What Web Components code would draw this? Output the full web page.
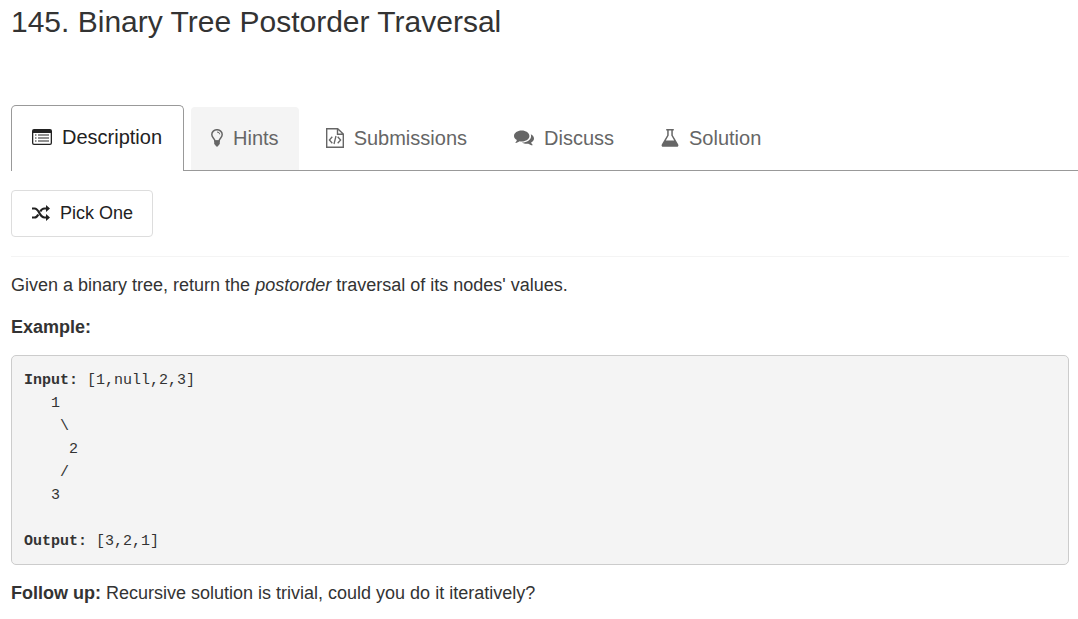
<!DOCTYPE html>
<html lang="en">
<head>
<meta charset="utf-8">
<meta name="viewport" content="width=device-width, initial-scale=1">
<title>145. Binary Tree Postorder Traversal</title>
<style>
  body { margin: 0; background: #fff; color: #333; font-family: "Liberation Sans", Arial, sans-serif; font-size: 18px; line-height: 26px; }
</style>
</head>
<body>
<problem-page>
  <span slot="title">145. Binary Tree Postorder Traversal</span>
  <tab-bar slot="tabs">
    <tab-link icon="list" active>Description</tab-link>
    <tab-link icon="bulb" shaded>Hints</tab-link>
    <tab-link icon="code">Submissions</tab-link>
    <tab-link icon="chat">Discuss</tab-link>
    <tab-link icon="flask">Solution</tab-link>
  </tab-bar>
  <pick-button>Pick One</pick-button>
  <problem-text></problem-text>
</problem-page>
<script>
const ICONS = {
  list: '<svg width="20" height="16" viewBox="0 0 20 16"><path fill-rule="evenodd" d="M2 0h16a2 2 0 0 1 2 2v12a2 2 0 0 1-2 2H2a2 2 0 0 1-2-2V2a2 2 0 0 1 2-2zM1.300 4v10a.7.7 0 0 0 .7.7h16a.7.7 0 0 0 .7-.7V4z"/><path d="M3 5.500h1.500v1H3zM6 5.500h11v1H6zM3 8.500h1.500v1H3zM6 8.500h11v1H6zM3 11.500h1.500v1H3zM6 11.500h11v1H6z"/></svg>',
  bulb: '<svg width="12" height="18" viewBox="0 0 12 18"><path d="M3.900 12C3.900 9.500.8 8.700.8 5.600a5.200 4.900 0 0 1 10.400 0c0 3.100-3.100 3.900-3.100 6.400z" fill="none" stroke="currentColor" stroke-width="1.500"/><path d="M3.200 11.400h5.600V15l-1 1-1 1.500H5.200L4.200 16l-1-1z"/><path d="M6 3a2.700 2.300 0 0 1 2.700 2.300" fill="none" stroke="currentColor"/></svg>',
  code: '<svg width="18" height="20" viewBox="0 0 18 20"><g fill="none" stroke="currentColor" stroke-width="1.4"><path d="M.7.7h11l5.600 5.400v13.200H.7zM11.500.7v5.600h5.800"/><path d="M6.300 8.800L3.400 12l2.900 3.200M11.700 8.800l2.900 3.200-2.900 3.200M10 8l-2 8" stroke-width="1.300"/></g></svg>',
  chat: '<svg width="20" height="16" viewBox="0 0 20 16"><path d="M7.700.5c4.300 0 7.700 2.400 7.700 5.500s-3.400 5.500-7.700 5.500c-.7 0-1.400-.1-2-.2-1.200.9-2.600 1.500-4 1.600-.3 0-.4-.3-.2-.5.700-.7 1.200-1.400 1.400-2.400C1.100 9 0 7.600 0 6 0 2.900 3.400.5 7.700.5z"/><path d="M16.700 4.300c2 .9 3.300 2.500 3.300 4.200 0 1.600-1.100 3-2.900 4 .3.900.8 1.600 1.500 2.300.2.200.1.500-.2.500-1.500-.1-2.900-.7-4.100-1.600-2.200.4-4.600 0-6.400-1.100 4.900.1 9.200-2.600 9.200-6.600 0-.6-.1-1.100-.4-1.700z"/></svg>',
  flask: '<svg width="18" height="18" viewBox="0 0 17 18"><path fill-rule="evenodd" d="M4.700 0h7.600v1.500h-1v4.700l5.300 9c.8 1.400.1 2.600-1.400 2.600H1.800c-1.500 0-2.200-1.200-1.400-2.600l5.300-9V1.500h-1zM7.200 1.500v5.100L4.300 11.500h8.400L9.800 6.600V1.500z"/></svg>',
  shuffle: '<svg width="18" height="16" viewBox="0 0 18 16"><path fill="none" stroke="currentColor" stroke-width="2.200" d="M0 3.500h2.500c5 0 4.500 9 10 9h2M0 12.500h2.500c2 0 3-1.400 3.800-3M8.300 6.500c.9-1.700 2-3 4.200-3h2"/><path d="M14 0l4 3.500L14 7zM14 9l4 3.500L14 16z"/></svg>'
};
const SVG_STYLE = 'svg { display: block; flex: none; fill: currentColor; }';

function define(name, render) {
  customElements.define(name, class extends HTMLElement {
    constructor() {
      super();
      this.attachShadow({ mode: 'open' });
    }
    connectedCallback() {
      this.shadowRoot.innerHTML = render(this);
    }
  });
}

define('problem-page', () => `
  <style>
    :host { display: block; }
    h1 { margin: 0 11px; padding: 2px 0 63px; font-size: 30px; font-weight: 400; line-height: 40px; }
    main { padding: 19px 9px 12px 11px; }
  </style>
  <h1><slot name="title"></slot></h1>
  <slot name="tabs"></slot>
  <main><slot></slot></main>`);

define('tab-bar', () => `
  <style>
    :host { display: block; padding-left: 11px; }
    nav { display: flex; align-items: flex-end; gap: 7px; box-shadow: inset 0 -1px #999; }
  </style>
  <nav aria-label="Problem sections"><slot></slot></nav>`);

define('tab-link', el => `
  <style>
    :host { display: block; flex: none; font-size: 20px; line-height: 24px; color: #666; padding-bottom: 1px; }
    :host([active]) { color: #222; padding-bottom: 0; }
    a { display: flex; align-items: center; gap: 10px; padding: 19px 20px 20px; color: inherit; text-decoration: none; border-radius: 4px 4px 0 0; }
    :host([shaded]) a { background: #f4f4f4; }
    :host([active]) a { background: #fff; border: 1px solid #999; border-bottom: 0; padding: 19px 21px 22px 20px; border-radius: 5px 5px 0 0; }
    ${SVG_STYLE}
  </style>
  <a href="#${el.getAttribute('icon')}"${el.hasAttribute('active') ? ' aria-current="page"' : ''}>${ICONS[el.getAttribute('icon')]}<slot></slot></a>`);

define('pick-button', () => `
  <style>
    :host { display: block; padding-bottom: 19px; border-bottom: 1px solid #f4f4f4; }
    button { display: flex; align-items: center; gap: 10px; margin: 0; padding: 9px 19px 10px 20px; border: 1px solid #ddd; border-radius: 4px; background: #fff; color: #222; font: inherit; }
    ${SVG_STYLE}
  </style>
  <button type="button">${ICONS.shuffle}<slot></slot></button>`);

define('problem-text', () => `
  <style>
    :host { display: block; }
    p { margin: 15px 0; }
    p + p { margin-top: 16px; }
    pre { margin: 15px 0; padding: 13px 12px 11px; border: 1px solid #ccc; border-radius: 5px; background: #f4f4f4; font: 15px/23px "Liberation Mono", Consolas, monospace; }
  </style>
  <p>Given a binary tree, return the <em>postorder</em> traversal of its nodes' values.</p>
  <p><strong>Example:</strong></p>
  <pre><strong>Input:</strong><span> [1,null,2,3]</span>
<span>   1
    \\
     2
    /
   3
</span>
<strong>Output:</strong> [3,2,1]</pre>
  <p><strong>Follow up:</strong> Recursive solution is trivial, could you do it iteratively?</p>`);
</script>
</body>
</html>
